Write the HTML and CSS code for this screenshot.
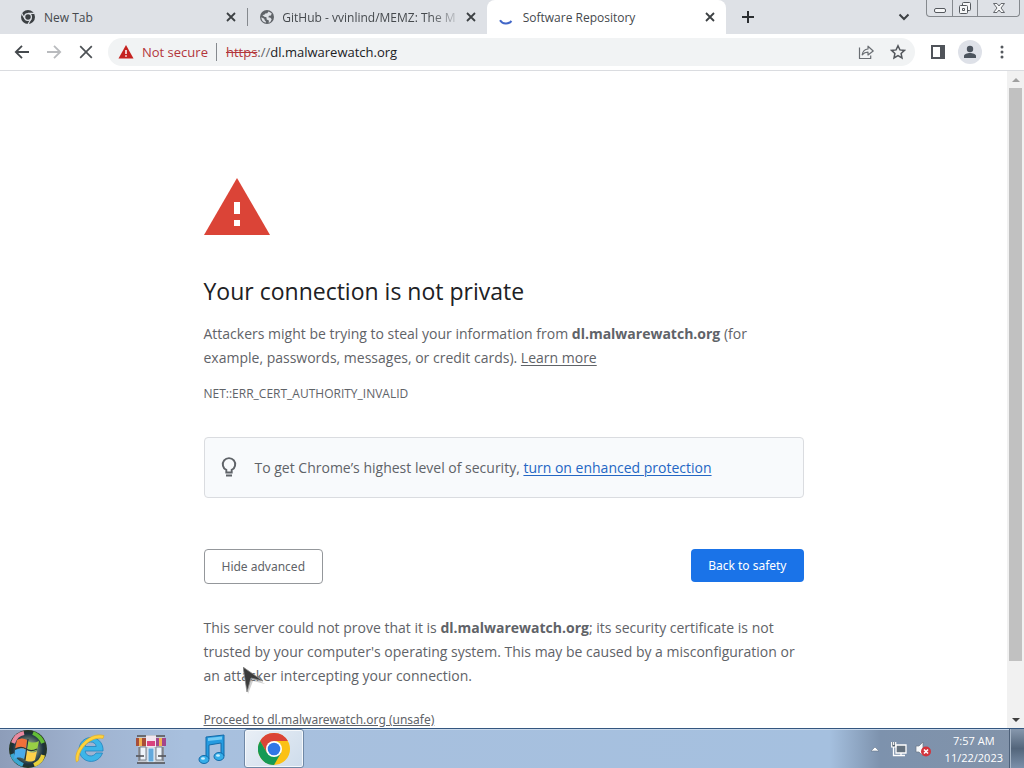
FILE: index.html
```html
<!DOCTYPE html>
<html lang="en">
<head>
<meta charset="utf-8">
<meta name="viewport" content="width=device-width, initial-scale=1">
<title>Software Repository</title>
<link rel="stylesheet" href="styles.css">
</head>
<body class="desktop">
<svg class="defs" aria-hidden="true">
  <symbol id="close" viewBox="0 0 16 16"><path d="M4 4l8 8M12 4l-8 8" fill="none" stroke="currentColor" stroke-width="1.8"/></symbol>
</svg>

<header class="tabstrip">
  <div class="tabs" role="tablist">
    <div class="tab" role="tab">
      <svg class="favicon" viewBox="0 0 16 16"><circle cx="8" cy="8" r="7" fill="#3c4043"/><circle cx="8" cy="8" r="3.4" fill="#3c4043" stroke="#dee1e6" stroke-width="1.3"/><path d="M8 4.4h6.4M4.9 9.8L1.6 4.3M11.1 9.8L8 15.2" stroke="#dee1e6" stroke-width="1.2"/></svg>
      <span class="tab-title">New Tab</span>
      <button class="tab-close" aria-label="Close New Tab"><svg viewBox="0 0 16 16"><use href="#close"/></svg></button>
    </div>
    <div class="tab divided" role="tab">
      <svg class="favicon" viewBox="0 0 16 16"><circle cx="8" cy="8" r="7" fill="#5f6368"/><path d="M9.5 2.4l3.2 1.9-.7 2.1-2 .3-.7 1.6 2.2.5 1.2 1.5-1.2 2.4-1.8 1.2.2-2.5-2.2-1-.3-2.1-2.1-.6L3.4 6l1.9-.2 1-1.4 2-.2zM2.3 8.2l2.900 1.500.6 1.800 1 .8v1.500A6 6 0 0 1 2.300 8.200z" fill="#dee1e6"/></svg>
      <span class="tab-title faded">GitHub - vvinlind/MEMZ: The ME</span>
      <button class="tab-close" aria-label="Close GitHub tab"><svg viewBox="0 0 16 16"><use href="#close"/></svg></button>
    </div>
    <div class="tab active" role="tab" aria-selected="true">
      <svg class="favicon" viewBox="0 0 16 16"><path d="M1 11.200A7.200 7.200 0 0 0 12.500 12" fill="none" stroke="#4267c8" stroke-width="2"/></svg>
      <span class="tab-title">Software Repository</span>
      <button class="tab-close" aria-label="Close Software Repository"><svg viewBox="0 0 16 16"><use href="#close"/></svg></button>
    </div>
  </div>
  <button class="new-tab" aria-label="New tab"><svg viewBox="0 0 16 16"><path d="M8 2v12M2 8h12" stroke="#2b2e31" stroke-width="2"/></svg></button>
  <button class="tab-search" aria-label="Search tabs"><svg viewBox="0 0 16 16"><path d="M3.500 5.500L8 10l4.500-4.500" fill="none" stroke="#3c4043" stroke-width="2"/></svg></button>
  <div class="window-controls">
    <button class="win" aria-label="Minimize"><svg viewBox="0 0 16 16"><rect x="2.500" y="8.500" width="11" height="4" rx="1.500" fill="#f6f7f8" stroke="#55595e"/></svg></button>
    <button class="win" aria-label="Restore"><svg viewBox="0 0 16 16"><rect x="5.500" y="2.500" width="8" height="8" rx="1" fill="#f6f7f8" stroke="#55595e"/><rect x="2.500" y="5.500" width="8" height="8" rx="1" fill="#f6f7f8" stroke="#55595e"/><path d="M5.500 8.500h2v2h-2z" fill="#fff" stroke="#55595e"/></svg></button>
    <button class="win win-close" aria-label="Close window"><svg viewBox="0 0 16 16"><path d="M2.500 3.500H6l2 2.500 2-2.500h3.500L10 8l3.500 4.500H10L8 10l-2 2.500H2.500L6 8z" fill="#f6f7f8" stroke="#66696e"/></svg></button>
  </div>
</header>

<nav class="toolbar" aria-label="Navigation">
  <button class="tool" aria-label="Back"><svg viewBox="0 0 16 16"><path d="M15 8H2M8 1.800L1.800 8 8 14.200" fill="none" stroke="#45494d" stroke-width="1.800"/></svg></button>
  <button class="tool" aria-label="Forward" disabled><svg viewBox="0 0 16 16"><path d="M1 8h13M8 1.800L14.200 8 8 14.200" fill="none" stroke="#b9bbbe" stroke-width="1.800"/></svg></button>
  <button class="tool" aria-label="Stop"><svg viewBox="0 0 16 16"><path d="M2.200 2.200l11.600 11.600M13.800 2.200L2.200 13.800" stroke="#4d5155" stroke-width="1.700"/></svg></button>
  <div class="omnibox">
    <button class="security"><svg viewBox="0 0 16 16"><path d="M8 1l7.500 13.500H.5z" fill="#c5221f"/><path d="M8 6v4M8 11.200v1.600" stroke="#fff" stroke-width="1.500"/></svg>Not secure</button>
    <label class="scheme" for="url"><s class="bad">https</s>://</label>
    <input class="url" id="url" type="text" value="dl.malwarewatch.org" spellcheck="false">
    <button class="tool" aria-label="Share"><svg viewBox="0 0 16 16"><path d="M1.500 3.500v11h11.200v-3M4.200 10.800C4.800 7 7 5.200 10 5V2.200L15.200 7 10 11V8.200C7.500 8.200 5.800 9 4.200 10.800z" fill="none" stroke="#6a6e73" stroke-width="1.200" stroke-linejoin="round"/></svg></button>
    <button class="tool" aria-label="Bookmark"><svg viewBox="0 0 16 16"><path d="M8 1.800l1.900 4.100 4.500.5-3.300 3.100.9 4.500L8 11.700 4 14l.9-4.500L1.600 6.400l4.500-.5z" fill="none" stroke="#53575c" stroke-width="1.500"/></svg></button>
  </div>
  <button class="tool" aria-label="Side panel"><svg viewBox="0 0 16 16"><path d="M1 1h14v14H1z" fill="#50545a"/><path d="M3 3h7v10H3z" fill="#fff"/></svg></button>
  <button class="tool avatar" aria-label="Profile"><svg viewBox="0 0 16 16"><circle cx="8" cy="5" r="3.200" fill="#4c545e"/><path d="M2 14v-2c0-2 3.500-3 6-3s6 1 6 3v2z" fill="#4c545e"/></svg></button>
  <button class="tool" aria-label="Menu"><svg viewBox="0 0 16 16"><g fill="#55595e"><circle cx="8" cy="3" r="1.500"/><circle cx="8" cy="8" r="1.500"/><circle cx="8" cy="13" r="1.500"/></g></svg></button>
</nav>

<div class="viewport">
  <main class="page">
    <div class="interstitial">
      <svg class="warning" viewBox="0 0 66 57"><path d="M33 0l33 57H0z" fill="#db4437"/><path d="M30 24h6v12h-6zM30 42h6v6h-6z" fill="#fff"/></svg>
      <h1 class="headline">Your connection is not private</h1>
      <p class="copy">Attackers might be trying to steal your information from <strong>dl.malwarewatch.org</strong> (for example, passwords, messages, or credit cards). <a class="link" href="#learn">Learn more</a></p>
      <p class="code">NET::ERR_CERT_AUTHORITY_INVALID</p>
      <div class="promo">
        <svg class="bulb" viewBox="0 0 24 24"><path d="M9.300 16.500v-2.600A6.200 6.200 0 1 1 14.700 13.900v2.600z" fill="none" stroke="#5f6368" stroke-width="1.900"/><path d="M9 19.500h6" stroke="#5f6368" stroke-width="2"/></svg>
        <p class="promo-text">To get Chrome’s highest level of security, <a class="link blue" href="#enhanced">turn on enhanced protection</a></p>
      </div>
      <div class="actions">
        <button class="btn">Hide advanced</button>
        <button class="btn primary">Back to safety</button>
      </div>
      <p class="copy">This server could not prove that it is <strong>dl.malwarewatch.org</strong>; its security certificate is not trusted by your computer's operating system. This may be caused by a misconfiguration or an attacker intercepting your connection.</p>
      <p class="proceed"><a class="link" href="#proceed">Proceed to dl.malwarewatch.org (unsafe)</a></p>
    </div>
  </main>
  <div class="scrollbar">
    <button class="scroll-step" aria-label="Scroll up"><svg viewBox="0 0 16 16"><path d="M4 10h8L8 6z" fill="#a0a0a0"/></svg></button>
    <div class="track"><div class="thumb"></div></div>
    <button class="scroll-step" aria-label="Scroll down"><svg viewBox="0 0 16 16"><path d="M4 6h8l-4 4z" fill="#3f3f3f"/></svg></button>
  </div>
</div>

<footer class="taskbar">
  <button class="app start" aria-label="Start"><svg viewBox="0 0 40 40">
    <defs><radialGradient id="orb"><stop offset="0" stop-color="#fff8c0"/><stop offset=".35" stop-color="#7f9480"/><stop offset=".8" stop-color="#1c3340"/><stop offset="1" stop-color="#26351f"/></radialGradient></defs>
    <circle cx="20" cy="20" r="19" fill="url(#orb)"/>
    <path d="M5 14C7 8 11 5 16 4" stroke="#e98aa0" stroke-width="4" fill="none"/><path d="M25 4c5 2 8 5 10 10" stroke="#62bd35" stroke-width="4" fill="none"/><path d="M4 25c2 6 6 9 11 11" stroke="#3aa6cf" stroke-width="4" fill="none"/><path d="M26 36c5-2 8-5 9-10" stroke="#e8d13b" stroke-width="4" fill="none"/>
    <path d="M9 11c4-2 7-2 10 0l-1 9c-3-2-7-2-11 0z" fill="#f0703a"/><path d="M20 12c3 2 7 2 11 0l-2 9c-3 2-7 2-10 0z" fill="#98cf45"/><path d="M7 21c4-2 8-2 11 0l-2 9c-3-2-7-2-10 0z" fill="#4aabea"/><path d="M19 22c3 2 7 2 10 0l-2 9c-3 2-7 2-10 0z" fill="#fdd14a"/><path d="M20 10l-3 21M7 20c4-2 8-2 11 0s7 2 11 0" stroke="#26343a" stroke-width="1.200" fill="none"/>
  </svg></button>
  <button class="app" aria-label="Internet Explorer"><svg viewBox="0 0 32 32">
    <path d="M28.500 20A12 12 0 1 1 29 15.500V18H11.200c.3 5.800 8.300 6.500 10.800 2zM11.200 13.500h11c-.5-6-10.500-6-11 0z" fill="#3db5e8" stroke="#2483bd" stroke-width=".8" fill-rule="evenodd"/><path d="M2.500 29C-2 19 14-2 30 2.500l-1 3C17 3 4 16 4.500 27.500z" fill="#ffd23c" stroke="#e0aa1c" stroke-width=".6"/>
  </svg></button>
  <button class="app" aria-label="Store"><svg viewBox="0 0 32 32">
    <path d="M3 2h26v28H3z" fill="#c5cad2"/><path d="M5 14h6v13H5zM21 14h6v13h-6z" fill="#eef4fa" stroke="#7b828c"/><path d="M13 15h6v14h-6z" fill="#63a9dc" stroke="#e8f3fc"/><path d="M1 5h10v8H1z" fill="#a84e39"/><path d="M21 5h10v8H21z" fill="#a3468c"/><path d="M4 5h3v8H4zM24 5h3v8h-3z" fill="#f2b250"/><path d="M11 3h10v11H11z" fill="#f2e6ef"/><path d="M12 8h8v5h-8z" fill="#d9447e"/><path d="M2 3h9M21 3h9M1 23h8M23 23h8M2 30h28" stroke="#4c4c50" stroke-width="1.500"/><path d="M4 14v14M28 14v14" stroke="#5a5d65"/>
  </svg></button>
  <button class="app" aria-label="Music"><svg viewBox="0 0 32 32">
    <path d="M10 4l18-2v21h-3V10l-12 2v14h-3z" fill="#259be0" stroke="#136ba9"/><path d="M12 5l14-1.500v3L12 8z" fill="#74ccf5"/><ellipse cx="8" cy="26.500" rx="5" ry="4" fill="#35ade9" stroke="#136ba9"/><ellipse cx="23" cy="23.500" rx="5" ry="4" fill="#35ade9" stroke="#136ba9"/><ellipse cx="7" cy="25.500" rx="2" ry="1.300" fill="#c9f0ff"/><ellipse cx="22" cy="22.500" rx="2" ry="1.300" fill="#c9f0ff"/>
  </svg></button>
  <button class="app current" aria-label="Google Chrome"><svg viewBox="0 0 32 32">
    <circle cx="16" cy="16" r="16" fill="#fbc116"/><path d="M16 16L9.100 20 2.140 8A16 16 0 0 1 29.860 8H16z" fill="#db4437"/><path d="M2.140 8A16 16 0 0 0 16 32l6.930-12L16 16l-6.930 4z" fill="#159a55"/><circle cx="16" cy="16" r="8" fill="#fff"/><circle cx="16" cy="16" r="6.300" fill="#3177e6"/>
  </svg></button>
  <div class="tray">
    <button class="tray-icon" aria-label="Show hidden icons"><svg viewBox="0 0 16 16"><path d="M4 10h8L8 6z" fill="#fff" stroke="#66778c" stroke-width=".6"/></svg></button>
    <button class="tray-icon" aria-label="Network"><svg viewBox="0 0 16 16"><path d="M5 4h10v8H5z" fill="#65727f" stroke="#fff" stroke-width="1.300"/><path d="M10 12v2M6 14.500h8M2.500 6v8.500H6" stroke="#fff" stroke-width="1.300" fill="none"/><path d="M.7 1v5h4V1M2.700 1v3" stroke="#fff" stroke-width="1.200" fill="#53616e"/></svg></button>
    <button class="tray-icon" aria-label="Volume muted"><svg viewBox="0 0 16 16"><path d="M1 5h3l4-4v14l-4-4H1z" fill="#f6f8fa" stroke="#6b7785" stroke-width=".7"/><circle cx="11" cy="10.500" r="5" fill="#d3333b"/><path d="M9 8.500l4 4M13 8.500l-4 4" stroke="#fff" stroke-width="1.600"/></svg></button>
    <time class="clock" datetime="2023-11-22T07:57"><span>7:57 AM</span><span>11/22/2023</span></time>
  </div>
  <button class="show-desktop" aria-label="Show desktop"></button>
</footer>

<svg class="pointer" viewBox="0 0 24 30" aria-hidden="true"><path d="M2 4l20 13-12-3-5 13z" fill="#777" opacity=".35"/><path d="M0 0l20 14-12-3-4 14z" fill="#3b3b3b" stroke="#8a8a8a" stroke-width=".8"/></svg>
</body>
</html>
```

FILE: styles.css
```css
* { box-sizing: border-box; }

.desktop {
  position: relative;
  display: flex;
  flex-direction: column;
  height: 100vh;
  margin: 0;
  overflow: hidden;
  background: #fff;
  color: #5f6368;
  font-family: "Open Sans", "Noto Sans", sans-serif;
  font-size: 14px;
}

.defs { position: absolute; width: 0; height: 0; }

button {
  padding: 0;
  border: 0;
  background: none;
  color: inherit;
  font: inherit;
}

svg { display: block; flex: none; }

/* Tab strip */
.tabstrip {
  display: flex;
  align-items: center;
  flex: none;
  height: 34px;
  padding: 0 4px 0 8px;
  background: #dee1e6;
}
.tabs { display: flex; flex: 0 1 718px; height: 100%; min-width: 0; }
.tab {
  display: flex;
  align-items: center;
  flex: 1 1 0;
  gap: 8px;
  min-width: 0;
  padding: 0 8px 0 12px;
  color: #45494d;
  font-size: 12px;
}
.divided {
  gap: 7px;
  background: linear-gradient(#85898e, #85898e) left center / 1px 18px no-repeat;
}
.active { border-radius: 8px 8px 0 0; background: #fff; }
.favicon { width: 16px; height: 16px; }
.tab-title { flex: 1; overflow: hidden; white-space: nowrap; }
.faded { mask-image: linear-gradient(to right, #000 85%, rgba(0, 0, 0, 0.2)); }
.tab-close, .tab-close svg { width: 16px; height: 16px; color: #3c4043; }
.new-tab { margin-left: 14px; }
.new-tab svg, .tab-search svg { width: 16px; height: 16px; }
.tab-search { margin-left: auto; margin-right: 14px; }
.window-controls {
  display: flex;
  align-self: flex-start;
  height: 17px;
  border: 1px solid #85898e;
  border-top: 0;
  border-radius: 0 0 4px 4px;
}
.win { display: grid; place-items: center; width: 25px; }
.win svg { width: 16px; height: 16px; }
.win + .win { border-left: 1px solid #85898e; }
.win-close { width: 42px; }

/* Toolbar */
.toolbar {
  display: flex;
  align-items: center;
  flex: none;
  gap: 8px;
  height: 37px;
  padding: 0 10px;
  border-bottom: 1px solid #dadce0;
  background: #fff;
}
.tool { display: grid; place-items: center; flex: none; width: 24px; height: 24px; }
.tool svg { width: 16px; height: 16px; }
.omnibox {
  display: flex;
  align-items: center;
  flex: 1;
  min-width: 0;
  height: 28px;
  margin: 0 3px 0 2px;
  padding: 0 5px 0 10px;
  border-radius: 14px;
  background: #f1f3f4;
}
.security {
  display: flex;
  align-items: center;
  gap: 8px;
  padding-right: 8px;
  border-right: 1px solid #85898e;
  color: #b3363b;
  font-size: 13px;
  line-height: 18px;
}
.security svg { width: 16px; height: 16px; }
.scheme { padding-left: 9px; font-size: 13px; }
.bad { color: #b3363b; }
.url {
  flex: 1;
  min-width: 0;
  padding: 0;
  border: 0;
  outline: 0;
  background: none;
  color: #202124;
  font: inherit;
  font-size: 13px;
}
.omnibox .tool + .tool { margin-left: 8px; }
.avatar { border-radius: 50%; background: #dee1e8; }

/* Page area */
.viewport { display: flex; flex: 1; min-height: 0; }
.page { flex: 1; min-width: 0; overflow: hidden; }
.interstitial { max-width: 600px; margin: 0 auto; padding-top: 107px; }
.warning { width: 66px; height: 57px; margin-bottom: 40px; }
.headline {
  margin: 0 0 15px;
  color: #202124;
  font-size: 23px;
  font-weight: 400;
  line-height: 32px;
}
.copy { margin: 0; line-height: 24px; }
.code { margin: 14px 0 33px; font-size: 12px; line-height: 20px; }
.link { color: inherit; text-underline-offset: 2px; }
.blue { color: #2467c4; }
.promo {
  display: flex;
  align-items: center;
  gap: 14px;
  padding: 18px 12px 17px;
  border: 1px solid #dadce0;
  border-radius: 4px;
  background: #f8fafc;
}
.bulb { width: 24px; height: 24px; }
.promo-text { margin: 0; line-height: 24px; }
.actions {
  display: flex;
  justify-content: space-between;
  align-items: flex-start;
  margin: 51px 0 32px;
}
.btn {
  padding: 8px 17px;
  border: 1px solid #94979b;
  border-radius: 4px;
  font-family: "Noto Sans", sans-serif;
  font-size: 12px;
  line-height: 17px;
}
.primary { border: 0; background: #1a73e8; color: #fff; }
.proceed {
  margin: 22px 0 0;
  font-family: "Noto Sans", sans-serif;
  font-size: 12px;
  line-height: 20px;
}
.proceed .link { text-underline-offset: 1px; }

.scrollbar { display: flex; flex-direction: column; width: 17px; background: #f1f1f1; }
.scroll-step { display: grid; place-items: center; height: 17px; }
.scroll-step svg { width: 16px; height: 16px; }
.track { flex: 1; padding: 0 2px; }
.thumb { height: 92%; background: #c1c1c1; }

/* Taskbar */
.taskbar {
  display: flex;
  flex: none;
  height: 40px;
  border-top: 1px solid #34567f;
  background: linear-gradient(to right, #8d9db9 0, #9fb2cf 8%, #a8c0de 18%, #a5c0df 81%, #7d92ad 86%, #8293a9 100%);
  box-shadow: inset 0 1px #c9d9ec;
}
.app { display: grid; place-items: center; width: 60px; margin-right: 1px; }
.app svg { width: 32px; height: 32px; }
.start { width: 56px; margin-right: 4px; }
.start svg { width: 40px; height: 40px; }
.current {
  margin-left: 1px;
  border: 1px solid #6f88a6;
  border-radius: 3px;
  background: linear-gradient(135deg, #e9eff6, #cedceb);
  box-shadow: inset 0 0 0 1px #f5f8fb;
}
.tray { display: flex; align-items: center; gap: 8px; margin-left: auto; padding-right: 6px; }
.tray-icon svg { width: 16px; height: 16px; }
.clock {
  display: flex;
  flex-direction: column;
  align-items: center;
  margin-left: 6px;
  color: #fff;
  font-size: 11px;
  line-height: 17px;
}
.show-desktop {
  width: 15px;
  border-left: 1px solid #4d6078;
  background: linear-gradient(#8798ad, #53657b 50%, #7b90aa);
  box-shadow: inset 1px 0 #a9b8c9;
}

/* Mouse pointer over the page */
.pointer { position: absolute; left: 243px; top: 667px; width: 24px; height: 30px; }
```
